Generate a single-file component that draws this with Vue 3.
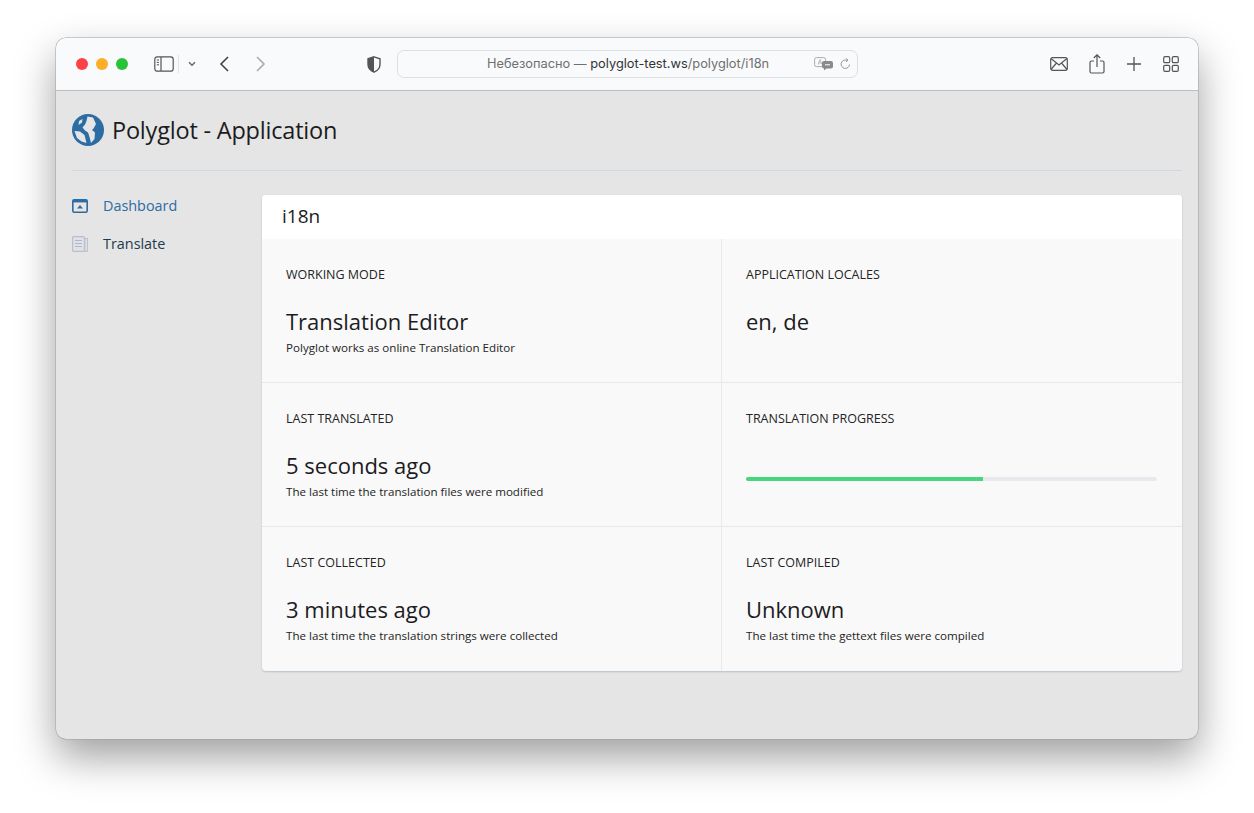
<script setup>
const stats = [
  { label: 'Working mode', value: 'Translation Editor', hint: 'Polyglot works as online Translation Editor' },
  { label: 'Application locales', value: 'en, de', hint: '' },
  { label: 'Last translated', value: '5 seconds ago', hint: 'The last time the translation files were modified' },
  { label: 'Translation progress', progress: 57.6 },
  { label: 'Last collected', value: '3 minutes ago', hint: 'The last time the translation strings were collected' },
  { label: 'Last compiled', value: 'Unknown', hint: 'The last time the gettext files were compiled' }
]
</script>

<template>
  <div class="page">
    <div class="window">
      <div class="toolbar">
        <div class="lights">
          <span class="light red"></span>
          <span class="light yellow"></span>
          <span class="light green"></span>
        </div>
        <svg class="tb-sidebar" width="20" height="16" viewBox="0 0 20 16" fill="none" stroke="#555" stroke-width="1.2">
          <rect x="0.8" y="0.8" width="18.4" height="14.4" rx="2.5" />
          <path d="M7 1v14" />
          <path d="M2.8 4h2.2M2.8 6.4h2.2M2.8 8.8h2.2" stroke-width="1" />
        </svg>
        <span class="tb-sep"></span>
        <svg class="tb-chevron" width="8" height="6" viewBox="0 0 8 6" fill="none" stroke="#666" stroke-width="1.4">
          <path d="M1 1.2l3 3 3-3" />
        </svg>
        <svg class="tb-back" width="12" height="16" viewBox="0 0 12 16" fill="none" stroke="#444" stroke-width="1.6">
          <path d="M10 1L3 8l7 7" />
        </svg>
        <svg class="tb-forward" width="12" height="16" viewBox="0 0 12 16" fill="none" stroke="#aaa" stroke-width="1.6">
          <path d="M2 1l7 7-7 7" />
        </svg>
        <svg class="tb-shield" width="14" height="17" viewBox="0 0 14 17">
          <path d="M7 .8l6 2v5.4c0 3.8-2.6 6.6-6 8-3.4-1.4-6-4.2-6-8V2.800z" fill="none" stroke="#555" stroke-width="1.4" />
          <path d="M7 .8v15.400c-3.400-1.400-6-4.200-6-8V2.800z" fill="#555" />
        </svg>
        <div class="address">
          <span class="addr-text">Небезопасно — <b>polyglot-test.ws</b>/polyglot/i18n</span>
          <svg class="addr-translate" width="20" height="14" viewBox="0 0 20 14">
            <rect x="0.6" y="0.600" width="11" height="9" rx="2" fill="none" stroke="#aaa" />
            <path d="M4 7.500l2-5 2 5M4.800 6h2.400" fill="none" stroke="#aaa" stroke-width=".8" />
            <rect x="8" y="4" width="11" height="7.500" rx="2" fill="#8a8a8a" />
            <path d="M10 11l0 2.500 3-2.500z" fill="#8a8a8a" />
            <path d="M11 7.800h5" stroke="#fff" />
          </svg>
          <svg class="addr-reload" width="11" height="12" viewBox="0 0 11 12" fill="none" stroke="#999">
            <path d="M9.500 6.500a4.200 4.200 0 1 1-3-4.300H8" />
            <path d="M6 .5l2 1.700-2 1.700" />
          </svg>
        </div>
        <div class="tb-right">
          <svg class="tb-mail" width="18" height="14" viewBox="0 0 18 14" fill="none" stroke="#555" stroke-width="1.200">
            <rect x="0.700" y="0.700" width="16.600" height="12.600" rx="2" />
            <path d="M1 1.500l8 6.500 8-6.500M1 12.500l5.500-6.500M17 12.500L11.500 6" />
          </svg>
          <svg width="16" height="20" viewBox="0 0 16 20" fill="none" stroke="#555" stroke-width="1.200">
            <path d="M5 7H2.500A1.500 1.500 0 0 0 1 8.500v9A1.500 1.500 0 0 0 2.500 19h11a1.500 1.500 0 0 0 1.500-1.500v-9A1.500 1.500 0 0 0 13.500 7H11" />
            <path d="M8 13V1M4.800 4L8 .8 11.200 4" />
          </svg>
          <svg width="14" height="14" viewBox="0 0 14 14" fill="none" stroke="#555" stroke-width="1.300">
            <path d="M7 0v14M0 7h14" />
          </svg>
          <svg width="16" height="16" viewBox="0 0 16 16" fill="none" stroke="#555" stroke-width="1.200">
            <rect x="0.700" y="0.700" width="6" height="6" rx="1.300" />
            <rect x="9.300" y="0.700" width="6" height="6" rx="1.300" />
            <rect x="0.700" y="9.300" width="6" height="6" rx="1.300" />
            <rect x="9.300" y="9.300" width="6" height="6" rx="1.300" />
          </svg>
        </div>
      </div>

      <div class="app">
        <header class="app-header">
          <svg class="logo" width="32" height="32" viewBox="0 0 32 32">
            <circle cx="16" cy="16" r="16" fill="#2b6ca3" />
            <path d="M15.500 2.500l5.500 1 3 6.500-2.500 4.500-1.500 1.500 3 2.500-.5 6.500-3.500 4-1.500-6-1.500-4.500-3-2-2.500-3 2.500-3 1.500-3.500z" fill="#e5e5e5" />
            <path d="M2.500 17l5.500.5 4.500 3.500 2 8-5-1.500-4.500-3.500z" fill="#e5e5e5" />
            <path d="M7 7l3.500-2-.5 3.500-3.500 2.500z" fill="#e5e5e5" />
          </svg>
          <h1>Polyglot - Application</h1>
        </header>

        <div class="app-body">
          <nav class="side">
            <a class="side-item active">
              <svg width="16" height="14" viewBox="0 0 16 14">
                <rect x="0.800" y="0.800" width="14.400" height="12.400" rx="1.500" fill="none" stroke="#2b6ca3" stroke-width="1.600" />
                <rect x="0.800" y="0.800" width="14.400" height="2.600" fill="#2b6ca3" />
                <path d="M8 6l3 3.500H5z" fill="#2b6ca3" />
              </svg>
              <span>Dashboard</span>
            </a>
            <a class="side-item">
              <svg width="16" height="16" viewBox="0 0 16 16">
                <rect x="0.600" y="0.600" width="11.800" height="14.800" rx="1" fill="#dfe2e6" stroke="#b9c0c9" stroke-width="1.200" />
                <rect x="12.800" y="2.500" width="2.600" height="12.900" fill="#dfe2e6" stroke="#b9c0c9" stroke-width="1" />
                <path d="M3 4.500h7M3 7.500h7M3 10.500h7" stroke="#b0b8c2" stroke-width="1.200" />
              </svg>
              <span>Translate</span>
            </a>
          </nav>

          <main class="card">
            <div class="card-title">i18n</div>
            <div class="grid">
              <div v-for="s in stats" :key="s.label" class="cell">
                <div class="label">{{ s.label }}</div>
                <template v-if="s.progress">
                  <div class="bar"><div class="bar-fill" :style="{ width: s.progress + '%' }"></div></div>
                </template>
                <template v-else>
                  <div class="value">{{ s.value }}</div>
                  <div class="hint">{{ s.hint }}</div>
                </template>
              </div>
            </div>
          </main>
        </div>
      </div>
    </div>
  </div>
</template>

<style>
html, body {
  margin: 0;
  background: #fff;
}
</style>

<style scoped>
.page {
  width: 1254px;
  height: 813px;
  box-sizing: border-box;
  padding: 38px 56px 0;
  overflow: hidden;
  font-family: "Open Sans", "Noto Sans", sans-serif;
}
.window {
  height: 701px;
  border-radius: 10px;
  background: #e5e5e5;
  box-shadow: 0 0 0 .5px #a0a0a0, 0 18px 40px rgba(0, 0, 0, .38);
  display: flex;
  flex-direction: column;
}
.toolbar {
  height: 52px;
  flex: none;
  display: flex;
  align-items: center;
  background: #f9fafc;
  border-bottom: 1px solid #bdbdbd;
  border-radius: 10px 10px 0 0;
  padding-left: 20px;
}
.lights {
  display: flex;
  gap: 8px;
}
.light {
  width: 12px;
  height: 12px;
  border-radius: 50%;
}
.red { background: #fc4245; }
.yellow { background: #fdae24; }
.green { background: #29c33a; }
.tb-sidebar {
  margin-left: 26px;
}
.tb-sep {
  width: 1px;
  height: 18px;
  background: #e3e3e3;
  margin-left: 4px;
}
.tb-chevron {
  margin-left: 9px;
}
.tb-back {
  margin-left: 22px;
}
.tb-forward {
  margin-left: 25px;
}
.tb-shield {
  margin-left: 100px;
}
.address {
  width: 461px;
  height: 28px;
  box-sizing: border-box;
  margin-left: 16px;
  margin-top: -1px;
  border: 1px solid #dedfe2;
  border-radius: 7px;
  display: flex;
  align-items: center;
  font-family: Inter, sans-serif;
  font-size: 12.800px;
  color: #6f6f6f;
}
.addr-text {
  margin-left: 89px;
  white-space: nowrap;
}
.addr-text b {
  font-weight: 400;
  color: #333;
}
.addr-translate {
  margin-left: 45px;
}
.addr-reload {
  margin-left: 6px;
}
.tb-right {
  margin-left: auto;
  margin-right: 19px;
  display: flex;
  align-items: center;
  gap: 22px;
}
.tb-mail {
  margin-right: -1px;
}
.app {
  flex: 1;
  padding: 0 16px;
  color: #1d1d1f;
}
.app-header {
  height: 79px;
  display: flex;
  align-items: center;
  gap: 8px;
  border-bottom: 1px solid #ccd8e3;
}
.logo {
  margin-top: -1px;
}
h1 {
  margin: -2px 0 0;
  font-size: 23.500px;
  font-weight: 400;
  letter-spacing: -.2px;
  color: #1c1c1e;
}
.app-body {
  display: flex;
  padding-top: 24px;
  gap: 30px;
}
.side {
  width: 160px;
  flex: none;
}
.side-item {
  display: flex;
  align-items: center;
  gap: 15px;
  height: 38px;
  margin-top: -8px;
  margin-bottom: 8px;
  font-size: 14.400px;
  color: #1f3a4d;
}
.side-item span {
  margin-top: -1px;
}
.side-item svg {
  flex: none;
}
.side-item.active {
  color: #2b6ca3;
}
.card {
  flex: 1;
  border-radius: 4px;
  background: #f9f9f9;
  box-shadow: 0 1px 2px rgba(110, 140, 170, .4);
  overflow: hidden;
}
.card-title {
  height: 44px;
  box-sizing: border-box;
  padding: 0 20px 2px;
  background: #fff;
  display: flex;
  align-items: center;
  font-size: 19px;
  color: #1c1c1e;
}
.grid {
  display: grid;
  grid-template-columns: 1fr 1fr;
  grid-auto-rows: 144px;
}
.cell {
  box-sizing: border-box;
  padding: 28px 24px 0;
  border-bottom: 1px solid #e8e8e8;
}
.cell:nth-child(odd) {
  border-right: 1px solid #e8e8e8;
}
.cell:nth-last-child(-n+2) {
  border-bottom: none;
}
.label {
  font-size: 12.500px;
  line-height: 16px;
  text-transform: uppercase;
  color: #242424;
}
.value {
  margin-top: 22px;
  font-size: 22px;
  line-height: 32px;
  color: #1c1c1e;
}
.hint {
  margin-top: 3px;
  font-size: 11.600px;
  line-height: 16px;
  color: #242424;
}
.bar {
  margin-top: 50px;
  width: 411px;
  height: 4px;
  border-radius: 2px;
  background: #e7e9ed;
  overflow: hidden;
}
.bar-fill {
  height: 100%;
  background: #48d57d;
}
</style>
